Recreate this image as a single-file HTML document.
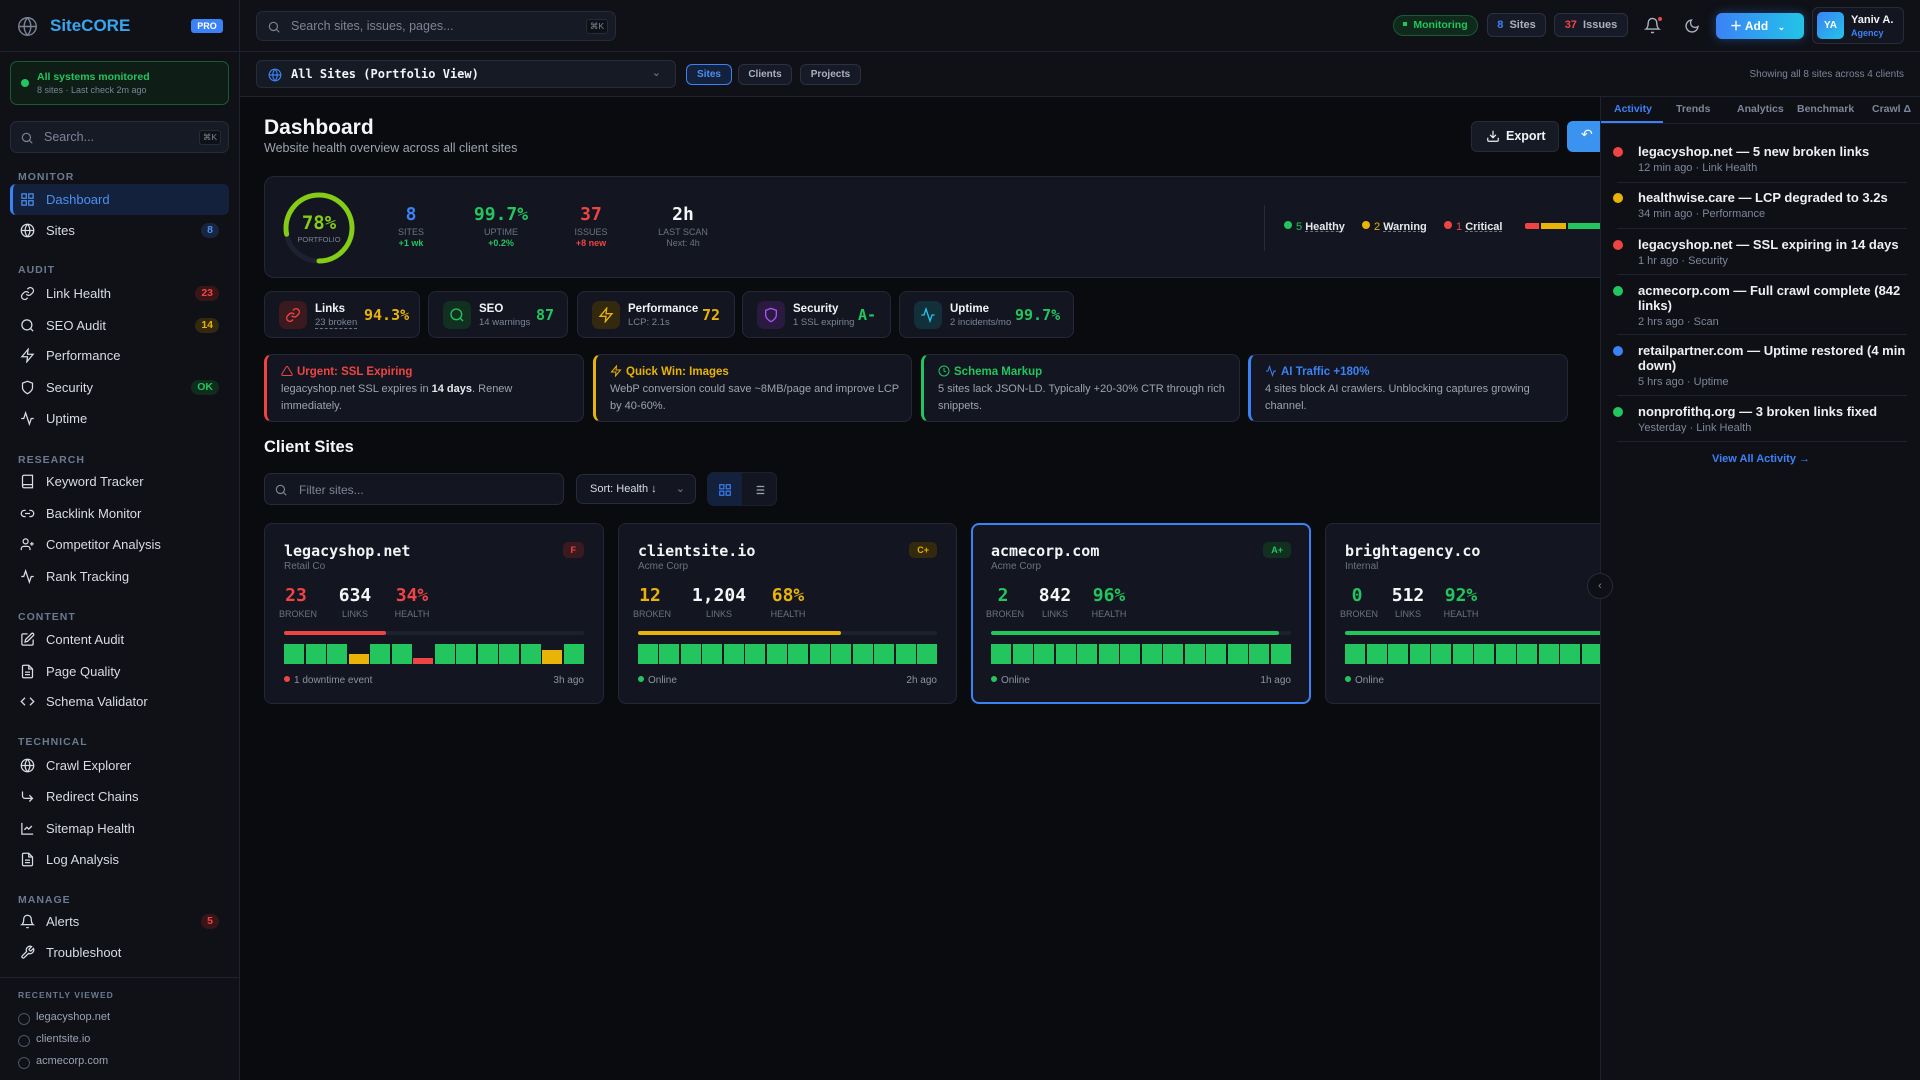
<!DOCTYPE html>
<html><head><meta charset="utf-8"><style>
*{box-sizing:border-box;margin:0;padding:0}
body{width:1920px;height:1080px;overflow:hidden;background:#0a0b0f;font-family:"Liberation Sans",Arial,sans-serif;color:#e5e7eb;position:relative}
.a{position:absolute}
.mono{font-family:"DejaVu Sans Mono","Liberation Mono",monospace}
#side{left:0;top:0;width:240px;height:1080px;background:#0f1117;border-right:1px solid #1f2330}
.lbl{position:absolute;left:18px;font-size:10.5px;font-weight:700;letter-spacing:1px;color:#6b7a90}
.it{position:absolute;left:10px;width:219px;height:31px;line-height:31px;font-size:13px;color:#d8dce4;padding-left:36px}
.it svg{position:absolute;left:10px;top:8px}
.bd{position:absolute;right:10px;top:8px;height:15px;line-height:15px;font-size:10.5px;font-weight:700;padding:0 6px;border-radius:8px}
.rv{position:absolute;left:18px;font-size:11px;color:#9aa3b4;padding-left:18px}
.rv:before{content:"";position:absolute;left:0;top:2px;width:10px;height:10px;border:1px solid #4b5263;border-radius:50%}
#top{left:240px;top:0;width:1680px;height:52px;background:#0f1117;border-bottom:1px solid #1f2330}
#sub{left:240px;top:52px;width:1680px;height:45px;background:#0f1117;border-bottom:1px solid #1f2330}
.pill{position:absolute;height:24px;line-height:22px;border:1px solid #2a3042;background:#161a26;border-radius:6px;font-size:11px;font-weight:700;color:#aab2c2;text-align:center}
.card{position:absolute;background:#131620;border:1px solid #232736;border-radius:8px}
.mc{top:291px;height:47px}
.mc .ic{position:absolute;left:14px;top:9px;width:28px;height:28px;border-radius:7px}
.mc .ic svg{position:absolute;left:6px;top:6px}
.mc .t{position:absolute;left:50px;top:11px;font-size:11.5px;font-weight:700;color:#f1f3f6}
.mc .s{position:absolute;left:50px;top:25px;font-size:9.5px;color:#7b8496}
.mc .v{position:absolute;top:14px;font-size:15px;font-weight:700}
.al{top:354px;height:68px;border-left-width:3px}
.al .t{position:absolute;left:14px;top:10px;font-size:11.5px;font-weight:700}
.al .t svg{vertical-align:-2px;margin-right:4px}
.al .b{position:absolute;left:14px;top:26px;right:12px;font-size:11px;line-height:17px;color:#9ca3af}
.sc{top:523px;height:181px;width:340px}
.sc .d{position:absolute;left:19px;top:18px;font-size:15px;font-weight:700;color:#f3f4f6}
.sc .c{position:absolute;left:19px;top:37px;font-size:10px;color:#6b7280}
.sc .g{position:absolute;right:19px;top:18px;height:16px;line-height:16px;padding:0 8px;border-radius:5px;font-size:9px;font-weight:700}
.st{position:absolute;top:61px;text-align:center}
.st b{display:block;font-size:18px;font-family:"DejaVu Sans Mono",monospace}
.st span{display:block;font-size:9px;color:#6b7280;margin-top:3px}
.pb{position:absolute;left:19px;right:19px;top:107px;height:4px;background:#1c2130;border-radius:2px}
.pb i{display:block;height:4px;border-radius:2px}
.bars{position:absolute;left:19px;right:19px;top:120px;height:20px;display:flex;gap:1.5px;align-items:flex-end}
.bars i{flex:1;height:20px;background:#22c55e}
.ft{position:absolute;left:19px;right:19px;top:151px;font-size:10px;color:#8b93a3}
.ft .r{position:absolute;right:0;top:0}
.dot{display:inline-block;width:6px;height:6px;border-radius:50%;margin-right:4px;vertical-align:1px}
#panel{left:1600px;top:97px;width:320px;height:983px;background:#0e1016;border-left:1px solid #1f2330;z-index:5}
.tb{position:absolute;top:6px;font-size:10.5px;font-weight:700;color:#7d8799}
.ac{position:absolute;left:37px;width:270px;font-size:13px;font-weight:700;color:#eef0f3;line-height:15px}
.ac i{position:absolute;left:-25px;top:3px;width:10px;height:10px;border-radius:50%}
.ac span{display:block;font-size:11px;font-weight:400;color:#7d8799;margin-top:2px}
.hr{position:absolute;left:16px;width:290px;height:1px;background:#1f2330}
</style></head><body>

<div id="side" class="a">
 <svg class="a" style="left:17px;top:16px" width="21" height="21" viewBox="0 0 24 24" fill="none" stroke="#7b8496" stroke-width="1.6"><circle cx="12" cy="12" r="10"/><path d="M2 12h20M12 2a15 15 0 0 1 0 20M12 2a15 15 0 0 0 0 20"/></svg>
 <div class="a" style="left:50px;top:16px;font-size:17px;font-weight:700;color:#38a6f0">SiteCORE</div>
 <div class="a" style="left:191px;top:19px;width:32px;height:14px;line-height:14px;border-radius:3px;background:#3b82f6;color:#fff;font-size:9px;font-weight:700;text-align:center">PRO</div>
 <div class="a" style="left:0;top:51px;width:240px;height:1px;background:#1f2330"></div>
 <div class="a" style="left:10px;top:61px;width:219px;height:44px;border:1px solid #1b5a34;background:#0f1d17;border-radius:7px">
  <div class="a" style="left:10px;top:17px;width:8px;height:8px;border-radius:50%;background:#22c55e"></div>
  <div class="a" style="left:26px;top:9px;font-size:10.5px;font-weight:700;color:#22c55e">All systems monitored</div>
  <div class="a" style="left:26px;top:23px;font-size:9px;color:#7b8496">8 sites · Last check 2m ago</div>
 </div>
 <div class="a" style="left:10px;top:121px;width:219px;height:32px;border:1px solid #262b3a;background:#161a25;border-radius:7px">
  <svg class="a" style="left:9px;top:9px" width="14" height="14" viewBox="0 0 24 24" fill="none" stroke="#7b8496" stroke-width="2"><circle cx="11" cy="11" r="7"/><path d="M21 21l-5-5"/></svg>
  <div class="a" style="left:33px;top:8px;font-size:12.5px;color:#7b8496">Search...</div>
  <div class="a" style="right:7px;top:8px;font-size:8.5px;color:#7b8496;background:#0f1117;border:1px solid #262b3a;border-radius:3px;padding:1px 3px">⌘K</div>
 </div>
 <div class="lbl" style="top:171px">MONITOR</div>
 <div class="it" style="top:184px;background:#14213d;color:#4a90f0;border-left:3px solid #3b82f6;border-radius:6px;padding-left:33px"><svg width="15" height="15" viewBox="0 0 24 24" fill="none" stroke="#4a90f0" stroke-width="2" style="left:7px"><rect x="3" y="3" width="7" height="7"/><rect x="14" y="3" width="7" height="7"/><rect x="3" y="14" width="7" height="7"/><rect x="14" y="14" width="7" height="7"/></svg>Dashboard</div>
 <div class="it" style="top:215px"><svg width="15" height="15" viewBox="0 0 24 24" fill="none" stroke="#d8dce4" stroke-width="2"><circle cx="12" cy="12" r="10"/><path d="M2 12h20M12 2a15 15 0 0 1 0 20M12 2a15 15 0 0 0 0 20"/></svg>Sites<span class="bd" style="background:#172540;color:#4a90f0">8</span></div>
 <div class="lbl" style="top:264px">AUDIT</div>
 <div class="it" style="top:278px"><svg width="15" height="15" viewBox="0 0 24 24" fill="none" stroke="#d8dce4" stroke-width="2"><path d="M10 13a5 5 0 0 0 7.5.5l3-3a5 5 0 0 0-7-7l-1.7 1.7M14 11a5 5 0 0 0-7.5-.5l-3 3a5 5 0 0 0 7 7l1.7-1.7"/></svg>Link Health<span class="bd" style="background:#3a1518;color:#ef4444">23</span></div>
 <div class="it" style="top:310px"><svg width="15" height="15" viewBox="0 0 24 24" fill="none" stroke="#d8dce4" stroke-width="2"><circle cx="11" cy="11" r="8"/><path d="M21 21l-4.3-4.3"/></svg>SEO Audit<span class="bd" style="background:#33290c;color:#eab308">14</span></div>
 <div class="it" style="top:340px"><svg width="15" height="15" viewBox="0 0 24 24" fill="none" stroke="#d8dce4" stroke-width="2"><path d="M13 2L3 14h9l-1 8 10-12h-9l1-8z"/></svg>Performance</div>
 <div class="it" style="top:372px"><svg width="15" height="15" viewBox="0 0 24 24" fill="none" stroke="#d8dce4" stroke-width="2"><path d="M12 22s8-4 8-10V5l-8-3-8 3v7c0 6 8 10 8 10z"/></svg>Security<span class="bd" style="background:#0f2d1c;color:#22c55e">OK</span></div>
 <div class="it" style="top:403px"><svg width="15" height="15" viewBox="0 0 24 24" fill="none" stroke="#d8dce4" stroke-width="2"><path d="M22 12h-4l-3 9L9 3l-3 9H2"/></svg>Uptime</div>
 <div class="lbl" style="top:454px">RESEARCH</div>
 <div class="it" style="top:466px"><svg width="15" height="15" viewBox="0 0 24 24" fill="none" stroke="#d8dce4" stroke-width="2"><path d="M4 19.5A2.5 2.5 0 0 1 6.5 17H20V2H6.5A2.5 2.5 0 0 0 4 4.5v15zM6.5 17A2.5 2.5 0 0 0 4 19.5 2.5 2.5 0 0 0 6.5 22H20v-5"/></svg>Keyword Tracker</div>
 <div class="it" style="top:498px"><svg width="15" height="15" viewBox="0 0 24 24" fill="none" stroke="#d8dce4" stroke-width="2"><path d="M9 17H7A5 5 0 0 1 7 7h2M15 7h2a5 5 0 0 1 0 10h-2M8 12h8"/></svg>Backlink Monitor</div>
 <div class="it" style="top:529px"><svg width="15" height="15" viewBox="0 0 24 24" fill="none" stroke="#d8dce4" stroke-width="2"><circle cx="9" cy="7" r="4"/><path d="M2 21v-2a4 4 0 0 1 4-4h6a4 4 0 0 1 4 4v2M19 8v6M22 11h-6"/></svg>Competitor Analysis</div>
 <div class="it" style="top:561px"><svg width="15" height="15" viewBox="0 0 24 24" fill="none" stroke="#d8dce4" stroke-width="2"><path d="M22 12h-4l-3 9L9 3l-3 9H2"/></svg>Rank Tracking</div>
 <div class="lbl" style="top:611px">CONTENT</div>
 <div class="it" style="top:624px"><svg width="15" height="15" viewBox="0 0 24 24" fill="none" stroke="#d8dce4" stroke-width="2"><path d="M12 3H5a2 2 0 0 0-2 2v14a2 2 0 0 0 2 2h14a2 2 0 0 0 2-2v-7"/><path d="M18.4 2.6a2 2 0 0 1 3 3L12 15l-4 1 1-4z"/></svg>Content Audit</div>
 <div class="it" style="top:656px"><svg width="15" height="15" viewBox="0 0 24 24" fill="none" stroke="#d8dce4" stroke-width="2"><path d="M14 2H6a2 2 0 0 0-2 2v16a2 2 0 0 0 2 2h12a2 2 0 0 0 2-2V8z"/><path d="M14 2v6h6M16 13H8M16 17H8"/></svg>Page Quality</div>
 <div class="it" style="top:686px"><svg width="15" height="15" viewBox="0 0 24 24" fill="none" stroke="#d8dce4" stroke-width="2"><path d="M16 18l6-6-6-6M8 6l-6 6 6 6"/></svg>Schema Validator</div>
 <div class="lbl" style="top:736px">TECHNICAL</div>
 <div class="it" style="top:750px"><svg width="15" height="15" viewBox="0 0 24 24" fill="none" stroke="#d8dce4" stroke-width="2"><circle cx="12" cy="12" r="10"/><path d="M2 12h20M12 2a15 15 0 0 1 0 20M12 2a15 15 0 0 0 0 20"/></svg>Crawl Explorer</div>
 <div class="it" style="top:781px"><svg width="15" height="15" viewBox="0 0 24 24" fill="none" stroke="#d8dce4" stroke-width="2"><path d="M15 10l5 5-5 5M4 4v7a4 4 0 0 0 4 4h12"/></svg>Redirect Chains</div>
 <div class="it" style="top:813px"><svg width="15" height="15" viewBox="0 0 24 24" fill="none" stroke="#d8dce4" stroke-width="2"><path d="M3 3v18h18M7 14l4-4 3 3 5-5"/></svg>Sitemap Health</div>
 <div class="it" style="top:844px"><svg width="15" height="15" viewBox="0 0 24 24" fill="none" stroke="#d8dce4" stroke-width="2"><path d="M14 2H6a2 2 0 0 0-2 2v16a2 2 0 0 0 2 2h12a2 2 0 0 0 2-2V8z"/><path d="M14 2v6h6M16 13H8M16 17H8"/></svg>Log Analysis</div>
 <div class="lbl" style="top:894px">MANAGE</div>
 <div class="it" style="top:906px"><svg width="15" height="15" viewBox="0 0 24 24" fill="none" stroke="#d8dce4" stroke-width="2"><path d="M6 8a6 6 0 0 1 12 0c0 7 3 9 3 9H3s3-2 3-9M10.3 21a1.9 1.9 0 0 0 3.4 0"/></svg>Alerts<span class="bd" style="background:#3a1518;color:#ef4444">5</span></div>
 <div class="it" style="top:937px"><svg width="15" height="15" viewBox="0 0 24 24" fill="none" stroke="#d8dce4" stroke-width="2"><path d="M14.7 6.3a1 1 0 0 0 0 1.4l1.6 1.6a1 1 0 0 0 1.4 0l3.8-3.8a6 6 0 0 1-7.9 7.9l-6.9 6.9a2.1 2.1 0 0 1-3-3l6.9-6.9a6 6 0 0 1 7.9-7.9z"/></svg>Troubleshoot</div>
 <div class="a" style="left:0;top:977px;width:240px;height:1px;background:#1f2330"></div>
 <div class="lbl" style="top:990px;font-size:8.5px">RECENTLY VIEWED</div>
 <div class="rv" style="top:1011px">legacyshop.net</div>
 <div class="rv" style="top:1033px">clientsite.io</div>
 <div class="rv" style="top:1055px">acmecorp.com</div>
</div>

<div id="top" class="a">
 <div class="a" style="left:16px;top:11px;width:360px;height:30px;border:1px solid #262b3a;background:#161a25;border-radius:7px">
  <svg class="a" style="left:10px;top:8px" width="14" height="14" viewBox="0 0 24 24" fill="none" stroke="#7b8496" stroke-width="2"><circle cx="11" cy="11" r="7"/><path d="M21 21l-5-5"/></svg>
  <div class="a" style="left:34px;top:7px;font-size:12.5px;color:#7b8496">Search sites, issues, pages...</div>
  <div class="a" style="right:7px;top:7px;font-size:8.5px;color:#7b8496;background:#0f1117;border:1px solid #262b3a;border-radius:3px;padding:1px 3px">⌘K</div>
 </div>
 <div class="pill" style="left:1153px;top:15px;width:85px;height:21px;line-height:19px;border-radius:11px;background:#0f2a1b;border-color:#1b5a34;color:#22c55e;font-size:10.5px"><span style="display:inline-block;width:4px;height:4px;background:#22c55e;vertical-align:2px;margin-right:6px"></span>Monitoring</div>
 <div class="pill" style="left:1247px;top:13px;width:59px"><span style="color:#3b82f6">8</span>&nbsp; Sites</div>
 <div class="pill" style="left:1314px;top:13px;width:74px"><span style="color:#ef4444">37</span>&nbsp; Issues</div>
 <svg class="a" style="left:1404px;top:17px" width="17" height="17" viewBox="0 0 24 24" fill="none" stroke="#aab2c2" stroke-width="2"><path d="M6 8a6 6 0 0 1 12 0c0 7 3 9 3 9H3s3-2 3-9M10.3 21a1.9 1.9 0 0 0 3.4 0"/></svg>
 <div class="a" style="left:1418px;top:17px;width:4px;height:4px;border-radius:50%;background:#ef4444"></div>
 <svg class="a" style="left:1444px;top:18px" width="16" height="16" viewBox="0 0 24 24" fill="none" stroke="#aab2c2" stroke-width="2"><path d="M21 12.8A9 9 0 1 1 11.2 3a7 7 0 0 0 9.8 9.8z"/></svg>
 <div class="a" style="left:1476px;top:13px;width:88px;height:26px;border-radius:6px;background:linear-gradient(90deg,#3b82f6,#22c4e8);color:#fff;font-size:12px;font-weight:700;line-height:26px;padding-left:14px;box-shadow:0 0 10px rgba(59,130,246,.4)">＋ Add <span style="font-size:9px;margin-left:6px">⌄</span></div>
 <div class="a" style="left:1572px;top:7px;width:92px;height:37px;border:1px solid #262b3a;background:#131620;border-radius:6px">
  <div class="a" style="left:4px;top:4px;width:27px;height:27px;border-radius:5px;background:linear-gradient(135deg,#3b82f6,#22c4e8);color:#fff;font-size:10px;font-weight:700;text-align:center;line-height:27px">YA</div>
  <div class="a" style="left:38px;top:6px;font-size:11px;font-weight:700;color:#f1f3f6">Yaniv A.</div>
  <div class="a" style="left:38px;top:20px;font-size:9px;font-weight:700;color:#3b82f6">Agency</div>
 </div>
</div>

<div id="sub" class="a">
 <div class="a" style="left:16px;top:8px;width:420px;height:28px;border:1px solid #262b3a;background:#161a25;border-radius:6px">
  <svg class="a" style="left:11px;top:7px" width="14" height="14" viewBox="0 0 24 24" fill="none" stroke="#3b82f6" stroke-width="2"><circle cx="12" cy="12" r="10"/><path d="M2 12h20M12 2a15 15 0 0 1 0 20M12 2a15 15 0 0 0 0 20"/></svg>
  <div class="a mono" style="left:34px;top:6px;font-size:12px;font-weight:700;color:#f1f3f6">All Sites (Portfolio View)</div>
  <div class="a" style="right:14px;top:5px;font-size:11px;color:#7b8496">⌄</div>
 </div>
 <div class="pill" style="left:446px;top:12px;width:46px;height:21px;line-height:19px;border-color:#3b82f6;background:#14213d;color:#4a90f0;font-size:10px">Sites</div>
 <div class="pill" style="left:498px;top:12px;width:54px;height:21px;line-height:19px;font-size:10px">Clients</div>
 <div class="pill" style="left:560px;top:12px;width:61px;height:21px;line-height:19px;font-size:10px">Projects</div>
 <div class="a" style="right:16px;top:17px;font-size:10px;color:#7b8496">Showing all 8 sites across 4 clients</div>
</div>

<div class="a" style="left:264px;top:116px;font-size:21px;font-weight:700;color:#f5f6f8">Dashboard</div>
<div class="a" style="left:264px;top:141px;font-size:12.5px;color:#9ca3af">Website health overview across all client sites</div>
<div class="a" style="left:1471px;top:121px;width:88px;height:31px;border:1px solid #262b3a;background:#161a25;border-radius:6px;font-size:12.5px;font-weight:700;line-height:29px;padding-left:34px;color:#f1f3f6"><svg class="a" style="left:14px;top:7px" width="14" height="14" viewBox="0 0 24 24" fill="none" stroke="#f1f3f6" stroke-width="2"><path d="M21 15v4a2 2 0 0 1-2 2H5a2 2 0 0 1-2-2v-4M7 10l5 5 5-5M12 15V3"/></svg>Export</div>
<div class="a" style="left:1567px;top:121px;width:60px;height:31px;background:#3b93f0;border-radius:6px;color:#fff;font-size:14px;padding:5px 14px">↶</div>

<div class="card" style="left:264px;top:176px;width:1360px;height:102px;border-radius:10px">
 <svg class="a" style="left:18px;top:15px" width="72" height="72" viewBox="0 0 72 72"><circle cx="36" cy="36" r="33" fill="none" stroke="#1d2232" stroke-width="5"/><path d="M36 69 A33 33 0 1 0 3.6 42.2" fill="none" stroke="#84cc16" stroke-width="5" stroke-linecap="round"/></svg>
 <div class="a mono" style="left:18px;top:35px;width:72px;text-align:center;font-size:19px;font-weight:700;color:#84cc16">78%</div>
 <div class="a" style="left:18px;top:58px;width:72px;text-align:center;font-size:7.5px;color:#7b8496">PORTFOLIO</div>
 <div class="st" style="left:116px;top:27px;width:60px"><b style="color:#3b82f6">8</b><span style="margin-top:2px">SITES</span><span style="color:#22c55e;font-weight:700;margin-top:1px">+1 wk</span></div>
 <div class="st" style="left:196px;top:27px;width:80px"><b style="color:#22c55e">99.7%</b><span style="margin-top:2px">UPTIME</span><span style="color:#22c55e;font-weight:700;margin-top:1px">+0.2%</span></div>
 <div class="st" style="left:296px;top:27px;width:60px"><b style="color:#ef4444">37</b><span style="margin-top:2px">ISSUES</span><span style="color:#ef4444;font-weight:700;margin-top:1px">+8 new</span></div>
 <div class="st" style="left:378px;top:27px;width:80px"><b style="color:#f5f6f8">2h</b><span style="margin-top:2px">LAST SCAN</span><span style="margin-top:1px">Next: 4h</span></div>
 <div class="a" style="left:999px;top:28px;width:1px;height:46px;background:#262b3a"></div>
 <div class="a" style="left:1019px;top:44px;font-size:11px;color:#e5e7eb"><span class="dot" style="background:#22c55e;width:8px;height:8px"></span><span style="color:#22c55e">5</span> <u style="text-decoration:underline dashed #6b7280;font-weight:700">Healthy</u></div>
 <div class="a" style="left:1097px;top:44px;font-size:11px;color:#e5e7eb"><span class="dot" style="background:#eab308;width:8px;height:8px"></span><span style="color:#eab308">2</span> <u style="text-decoration:underline dashed #6b7280;font-weight:700">Warning</u></div>
 <div class="a" style="left:1179px;top:44px;font-size:11px;color:#e5e7eb"><span class="dot" style="background:#ef4444;width:8px;height:8px"></span><span style="color:#ef4444">1</span> <u style="text-decoration:underline dashed #6b7280;font-weight:700">Critical</u></div>
 <div class="a" style="left:1260px;top:46px;width:14px;height:6px;background:#ef4444;border-radius:2px 0 0 2px"></div>
 <div class="a" style="left:1276px;top:46px;width:25px;height:6px;background:#eab308"></div>
 <div class="a" style="left:1303px;top:46px;width:60px;height:6px;background:#22c55e"></div>
</div>

<div class="card mc" style="left:264px;width:156px"><div class="ic" style="background:#3a1a1f"><svg width="16" height="16" viewBox="0 0 24 24" fill="none" stroke="#ef4444" stroke-width="2"><path d="M10 13a5 5 0 0 0 7.5.5l3-3a5 5 0 0 0-7-7l-1.7 1.7M14 11a5 5 0 0 0-7.5-.5l-3 3a5 5 0 0 0 7 7l1.7-1.7"/></svg></div><div class="t">Links</div><div class="s" style="border-bottom:1px dashed #6b7280">23 broken</div><div class="v mono" style="left:99px;color:#eab308">94.3%</div></div>
<div class="card mc" style="left:428px;width:140px"><div class="ic" style="background:#12301f"><svg width="16" height="16" viewBox="0 0 24 24" fill="none" stroke="#22c55e" stroke-width="2"><circle cx="11" cy="11" r="8"/><path d="M21 21l-4.3-4.3"/></svg></div><div class="t">SEO</div><div class="s">14 warnings</div><div class="v mono" style="left:107px;color:#22c55e">87</div></div>
<div class="card mc" style="left:577px;width:158px"><div class="ic" style="background:#33290e"><svg width="16" height="16" viewBox="0 0 24 24" fill="none" stroke="#eab308" stroke-width="2"><path d="M13 2L3 14h9l-1 8 10-12h-9l1-8z"/></svg></div><div class="t">Performance</div><div class="s">LCP: 2.1s</div><div class="v mono" style="left:124px;color:#eab308">72</div></div>
<div class="card mc" style="left:742px;width:149px"><div class="ic" style="background:#2a1a40"><svg width="16" height="16" viewBox="0 0 24 24" fill="none" stroke="#a855f7" stroke-width="2"><path d="M12 22s8-4 8-10V5l-8-3-8 3v7c0 6 8 10 8 10z"/></svg></div><div class="t">Security</div><div class="s">1 SSL expiring</div><div class="v mono" style="left:115px;color:#22c55e">A-</div></div>
<div class="card mc" style="left:899px;width:175px"><div class="ic" style="background:#12303a"><svg width="16" height="16" viewBox="0 0 24 24" fill="none" stroke="#22c4e8" stroke-width="2"><path d="M22 12h-4l-3 9L9 3l-3 9H2"/></svg></div><div class="t">Uptime</div><div class="s">2 incidents/mo</div><div class="v mono" style="left:115px;color:#22c55e">99.7%</div></div>

<div class="card al" style="left:264px;width:320px;border-left-color:#ef4444"><div class="t" style="color:#ef4444"><svg width="12" height="12" viewBox="0 0 24 24" fill="none" stroke="#ef4444" stroke-width="2"><path d="M10.3 3.9L1.8 18a2 2 0 0 0 1.7 3h17a2 2 0 0 0 1.7-3L13.7 3.9a2 2 0 0 0-3.4 0z"/></svg>Urgent: SSL Expiring</div><div class="b">legacyshop.net SSL expires in <b style="color:#e5e7eb">14 days</b>. Renew immediately.</div></div>
<div class="card al" style="left:593px;width:319px;border-left-color:#eab308"><div class="t" style="color:#eab308"><svg width="12" height="12" viewBox="0 0 24 24" fill="none" stroke="#eab308" stroke-width="2"><path d="M13 2L3 14h9l-1 8 10-12h-9l1-8z"/></svg>Quick Win: Images</div><div class="b">WebP conversion could save ~8MB/page and improve LCP by 40-60%.</div></div>
<div class="card al" style="left:921px;width:319px;border-left-color:#22c55e"><div class="t" style="color:#22c55e"><svg width="12" height="12" viewBox="0 0 24 24" fill="none" stroke="#22c55e" stroke-width="2"><circle cx="12" cy="12" r="10"/><path d="M12 6v6l4 2"/></svg>Schema Markup</div><div class="b">5 sites lack JSON-LD. Typically +20-30% CTR through rich snippets.</div></div>
<div class="card al" style="left:1248px;width:320px;border-left-color:#3b82f6"><div class="t" style="color:#3b82f6"><svg width="12" height="12" viewBox="0 0 24 24" fill="none" stroke="#3b82f6" stroke-width="2"><path d="M22 12h-4l-3 9L9 3l-3 9H2"/></svg>AI Traffic +180%</div><div class="b">4 sites block AI crawlers. Unblocking captures growing channel.</div></div>

<div class="a" style="left:264px;top:438px;font-size:16.5px;font-weight:700;color:#f5f6f8">Client Sites</div>
<div class="a" style="left:264px;top:473px;width:300px;height:32px;border:1px solid #262b3a;background:#131620;border-radius:7px"><svg class="a" style="left:9px;top:9px" width="14" height="14" viewBox="0 0 24 24" fill="none" stroke="#7b8496" stroke-width="2"><circle cx="11" cy="11" r="7"/><path d="M21 21l-5-5"/></svg><div class="a" style="left:34px;top:9px;font-size:12px;color:#7b8496">Filter sites...</div></div>
<div class="a" style="left:576px;top:474px;width:120px;height:30px;border:1px solid #262b3a;background:#131620;border-radius:7px;font-size:11px;color:#d8dce4;line-height:28px;padding-left:13px">Sort: Health ↓<span style="position:absolute;right:10px;color:#7b8496">⌄</span></div>
<div class="a" style="left:707px;top:472px;width:70px;height:34px;border-radius:7px;background:#131620;border:1px solid #1c2130"><div class="a" style="left:0;top:0;width:34px;height:33px;background:#14213d;border-radius:6px 0 0 6px"></div><svg class="a" style="left:10px;top:10px" width="14" height="14" viewBox="0 0 24 24" fill="none" stroke="#3b82f6" stroke-width="2"><rect x="3" y="3" width="7" height="7"/><rect x="14" y="3" width="7" height="7"/><rect x="3" y="14" width="7" height="7"/><rect x="14" y="14" width="7" height="7"/></svg><svg class="a" style="left:44px;top:10px" width="14" height="14" viewBox="0 0 24 24" fill="none" stroke="#9ca3af" stroke-width="2"><path d="M8 6h13M8 12h13M8 18h13M3 6h.01M3 12h.01M3 18h.01"/></svg></div>

<div class="card sc" style="left:264px">
 <div class="d mono">legacyshop.net</div><div class="c">Retail Co</div><div class="g" style="background:#3a1a1f;color:#ef4444">F</div>
 <div class="st" style="left:14px;width:34px"><b style="color:#ef4444">23</b><span>BROKEN</span></div>
 <div class="st" style="left:70px;width:40px"><b style="color:#f5f6f8">634</b><span>LINKS</span></div>
 <div class="st" style="left:125px;width:44px"><b style="color:#ef4444">34%</b><span>HEALTH</span></div>
 <div class="pb"><i style="width:34%;background:#ef4444"></i></div>
 <div class="bars"><i></i><i></i><i></i><i style="height:10px;background:#eab308"></i><i></i><i></i><i style="height:6px;background:#ef4444"></i><i></i><i></i><i></i><i></i><i></i><i style="height:14px;background:#eab308"></i><i></i></div>
 <div class="ft"><span class="dot" style="background:#ef4444"></span>1 downtime event<span class="r">3h ago</span></div>
</div>
<div class="card sc" style="left:618px;width:339px">
 <div class="d mono">clientsite.io</div><div class="c">Acme Corp</div><div class="g" style="background:#33290e;color:#eab308">C+</div>
 <div class="st" style="left:14px;width:34px"><b style="color:#eab308">12</b><span>BROKEN</span></div>
 <div class="st" style="left:60px;width:80px"><b style="color:#f5f6f8">1,204</b><span>LINKS</span></div>
 <div class="st" style="left:147px;width:44px"><b style="color:#eab308">68%</b><span>HEALTH</span></div>
 <div class="pb"><i style="width:68%;background:#eab308"></i></div>
 <div class="bars"><i></i><i></i><i></i><i></i><i></i><i></i><i></i><i></i><i></i><i></i><i></i><i></i><i></i><i></i></div>
 <div class="ft"><span class="dot" style="background:#22c55e"></span>Online<span class="r">2h ago</span></div>
</div>
<div class="card sc" style="left:971px;width:340px;border:2px solid #3b82f6">
 <div class="d mono" style="left:18px;top:17px">acmecorp.com</div><div class="c" style="left:18px;top:36px">Acme Corp</div><div class="g" style="background:#12301f;color:#22c55e;top:17px;right:18px">A+</div>
 <div class="st" style="left:13px;width:34px;top:60px"><b style="color:#22c55e">2</b><span>BROKEN</span></div>
 <div class="st" style="left:62px;width:40px;top:60px"><b style="color:#f5f6f8">842</b><span>LINKS</span></div>
 <div class="st" style="left:114px;width:44px;top:60px"><b style="color:#22c55e">96%</b><span>HEALTH</span></div>
 <div class="pb" style="left:18px;right:18px;top:106px"><i style="width:96%;background:#22c55e"></i></div>
 <div class="bars" style="left:18px;right:18px;top:119px"><i></i><i></i><i></i><i></i><i></i><i></i><i></i><i></i><i></i><i></i><i></i><i></i><i></i><i></i></div>
 <div class="ft" style="left:18px;right:18px;top:150px"><span class="dot" style="background:#22c55e"></span>Online<span class="r">1h ago</span></div>
</div>
<div class="card sc" style="left:1325px">
 <div class="d mono">brightagency.co</div><div class="c">Internal</div>
 <div class="st" style="left:14px;width:34px"><b style="color:#22c55e">0</b><span>BROKEN</span></div>
 <div class="st" style="left:62px;width:40px"><b style="color:#f5f6f8">512</b><span>LINKS</span></div>
 <div class="st" style="left:113px;width:44px"><b style="color:#22c55e">92%</b><span>HEALTH</span></div>
 <div class="pb"><i style="width:92%;background:#22c55e"></i></div>
 <div class="bars"><i></i><i></i><i></i><i></i><i></i><i></i><i></i><i></i><i></i><i></i><i></i><i></i><i></i><i></i></div>
 <div class="ft"><span class="dot" style="background:#22c55e"></span>Online</div>
</div>

<div id="panel" class="a">
 <div class="a" style="left:0;top:26px;width:320px;height:1px;background:#1f2330"></div>
 <div class="tb" style="left:13px;color:#3b82f6">Activity</div>
 <div class="a" style="left:0;top:24px;width:62px;height:2px;background:#3b82f6"></div>
 <div class="tb" style="left:75px">Trends</div>
 <div class="tb" style="left:136px">Analytics</div>
 <div class="tb" style="left:196px">Benchmark</div>
 <div class="tb" style="left:271px">Crawl Δ</div>
 <div class="ac" style="top:47px"><i style="background:#ef4444"></i>legacyshop.net — 5 new broken links<span>12 min ago · Link Health</span></div>
 <div class="hr" style="top:85px"></div>
 <div class="ac" style="top:93px"><i style="background:#eab308"></i>healthwise.care — LCP degraded to 3.2s<span>34 min ago · Performance</span></div>
 <div class="hr" style="top:131px"></div>
 <div class="ac" style="top:140px"><i style="background:#ef4444"></i>legacyshop.net — SSL expiring in 14 days<span>1 hr ago · Security</span></div>
 <div class="hr" style="top:177px"></div>
 <div class="ac" style="top:186px"><i style="background:#22c55e"></i>acmecorp.com — Full crawl complete (842 links)<span>2 hrs ago · Scan</span></div>
 <div class="hr" style="top:237px"></div>
 <div class="ac" style="top:246px"><i style="background:#3b82f6"></i>retailpartner.com — Uptime restored (4 min down)<span>5 hrs ago · Uptime</span></div>
 <div class="hr" style="top:298px"></div>
 <div class="ac" style="top:307px"><i style="background:#22c55e"></i>nonprofithq.org — 3 broken links fixed<span>Yesterday · Link Health</span></div>
 <div class="hr" style="top:344px"></div>
 <div class="a" style="left:0;width:320px;top:356px;text-align:center;font-size:11px;font-weight:700;color:#3b82f6">View All Activity →</div>
</div>
<div class="a" style="left:1587px;top:573px;width:26px;height:26px;border-radius:50%;background:#0e1016;border:1px solid #262b3a;z-index:6;color:#7b8496;font-size:11px;text-align:center;line-height:24px">‹</div>
</body></html>
